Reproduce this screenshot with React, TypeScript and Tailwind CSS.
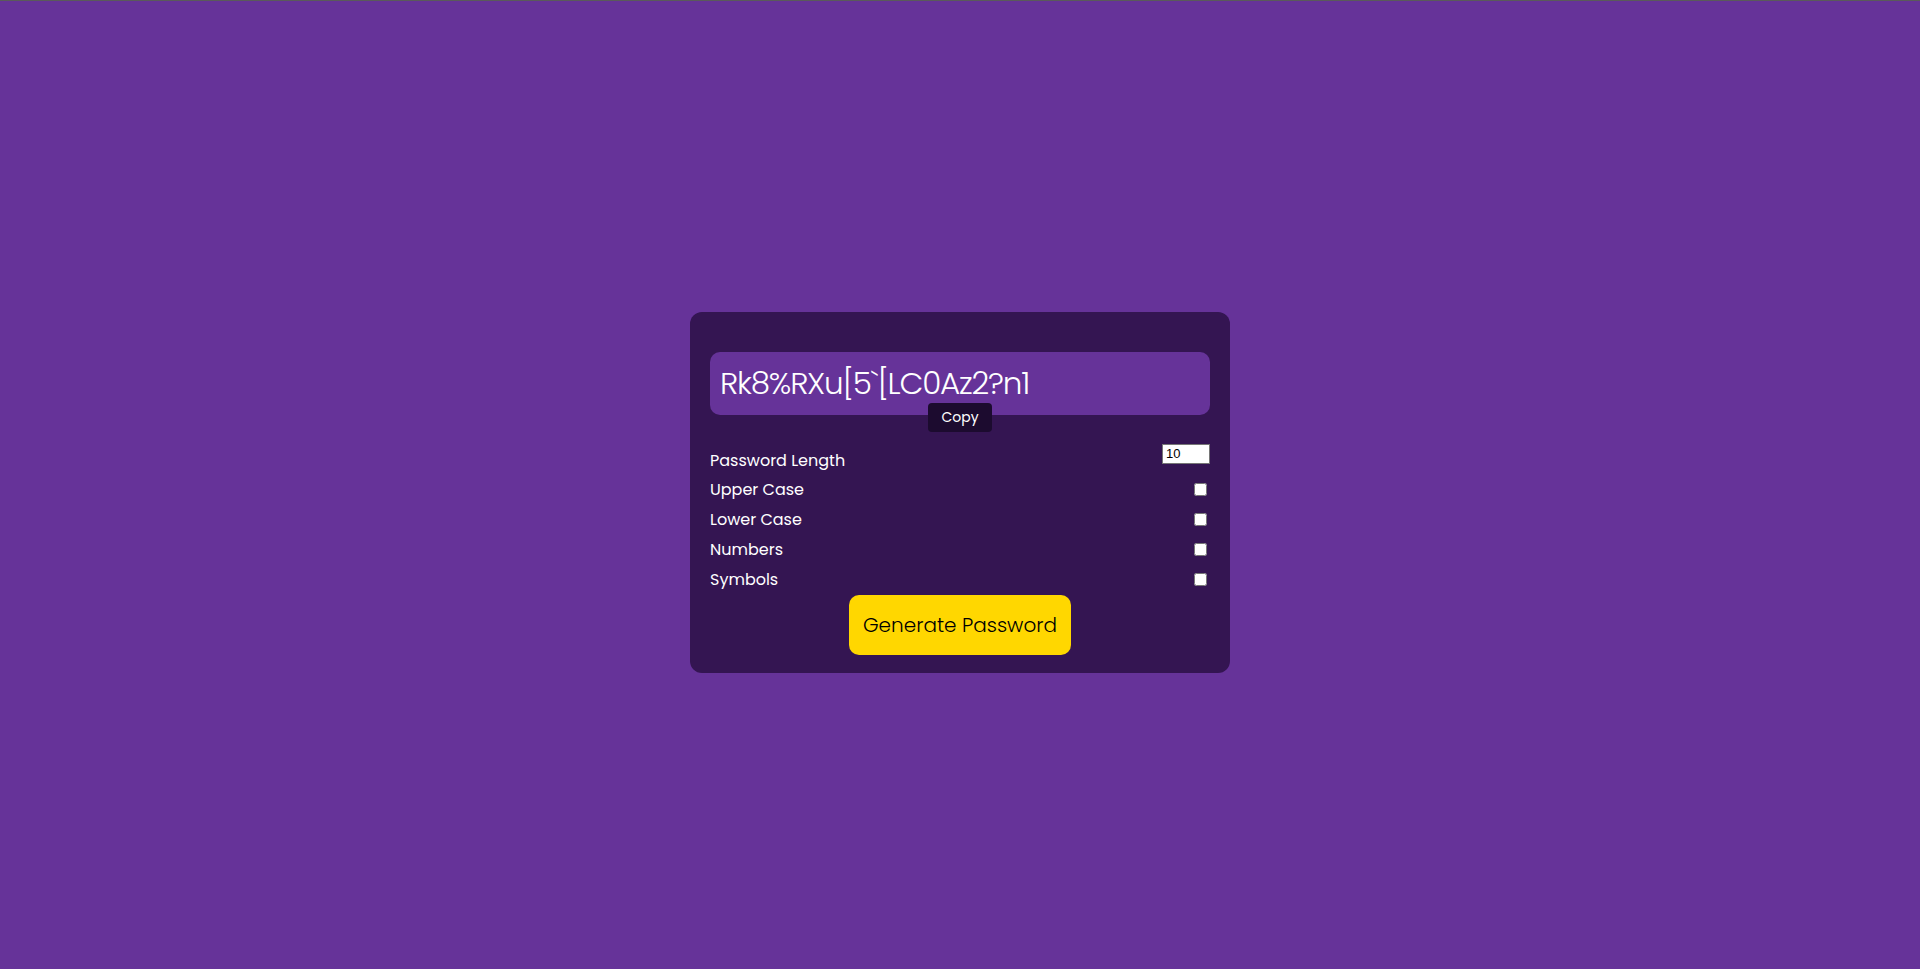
import { useState } from "react";

const font = { fontFamily: "Poppins, Inter, 'Open Sans', sans-serif" };

const options = ["Upper Case", "Lower Case", "Numbers", "Symbols"];

export default function App() {
  const [length, setLength] = useState(10);

  return (
    <main
      className="min-h-[969px] bg-[#663399] border-t border-[#5a5a5a] flex items-center justify-center pt-[14px]"
      style={font}
    >
      <div className="w-[540px] bg-[#341552] rounded-[12px] px-5 pt-10 pb-[18px]">
        {/* Password Display */}
        <div className="relative">
          <div className="h-[63px] bg-[#663399] rounded-[10px] flex items-center px-[10px]">
            <span className="text-white text-[31px] font-light leading-none tracking-[-1.2px]">
              Rk8%RXu[5`[LC0Az2?n1
            </span>
          </div>
          <div className="absolute left-1/2 -translate-x-1/2 top-[51px] w-[64px] h-[29px] bg-[#1c0b2f] rounded-[4px] flex items-center justify-center text-white text-[14px]">
            Copy
          </div>
        </div>

        {/* Options */}
        <div className="mt-[30px] flex flex-col">
          <div className="h-[30px] flex items-center justify-between text-white text-[16px]">
            <span className="mt-[2px]">Password Length</span>
            <input
              type="number"
              value={length}
              onChange={(e) => setLength(Number(e.target.value))}
              className="w-[48px] h-[20px] mb-[12px] bg-white text-black text-[13px] px-[3px] border border-[#767676] outline-none [appearance:textfield]"
              style={{ fontFamily: "'Liberation Sans', Arial, sans-serif" }}
            />
          </div>
          {options.map((label) => (
            <div key={label} className="h-[30px] flex items-center justify-between text-white text-[16px]">
              <span>{label}</span>
              <input type="checkbox" className="w-[13px] h-[13px] mr-[3px] accent-white" />
            </div>
          ))}
        </div>

        {/* Generate Button */}
        <div className="flex justify-center">
          <button className="w-[222px] h-[60px] bg-[#ffd700] rounded-[10px] text-black text-[20px] font-light">
            Generate Password
          </button>
        </div>
      </div>
    </main>
  );
}
